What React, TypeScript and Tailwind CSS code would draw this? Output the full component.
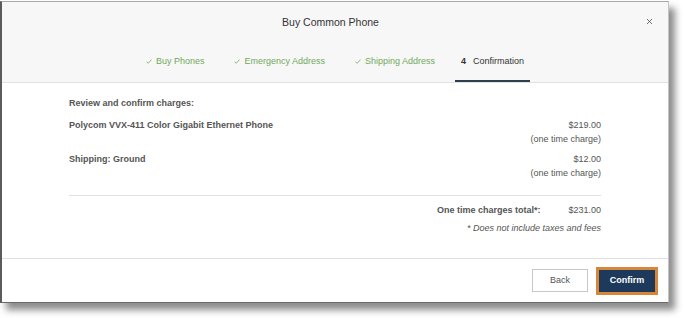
import { X } from 'lucide-react';

const steps = [
  { label: 'Buy Phones', done: true },
  { label: 'Emergency Address', done: true },
  { label: 'Shipping Address', done: true },
  { label: 'Confirmation', done: false, num: '4' },
];

function Check() {
  return (
    <svg width="6" height="5" viewBox="0 0 6 5" className="mr-[4px]">
      <path d="M0.5 2.8 L2.2 4.3 L5.5 0.6" fill="none" stroke="#72a95e" strokeWidth="0.8" />
    </svg>
  );
}

export default function App() {
  return (
    <div className="w-[684px] h-[318px] bg-white font-['Liberation_Sans',Arial,sans-serif] overflow-hidden">
      <div className="mt-[1px] w-[669px] h-[302px] flex flex-col bg-white border-l-2 border-l-[#5b5b5b] border-t border-t-[#a8a8a8] border-r border-r-[#c4c4c4] border-b border-b-[#6a6a6a] shadow-[6px_7px_7px_rgba(0,0,0,0.45)]">
        {/* Header */}
        <div className="relative bg-[#f7f7f7] border-b border-[#e1e1e1] flex flex-col items-center pt-[12px]">
          <div className="mr-[9px] text-[10.5px] leading-[16px] text-[#333]">Buy Common Phone</div>
          <button className="absolute right-[14px] top-[15px] text-[#444]">
            <X className="w-[9px] h-[9px]" strokeWidth={2} />
          </button>
          <div className="mt-[24px] flex items-end gap-[18px]">
            {steps.map((s) => (
              <div
                key={s.label}
                className={`flex items-center px-[6px] pb-[12px] text-[9px] leading-[14px] border-b-2 ${
                  s.done ? 'text-[#72a95e] border-transparent' : '-ml-[4px] text-[#333] border-[#2c3e50]'
                }`}
              >
                {s.done ? <Check /> : <span className="font-bold mr-[7px]">{s.num}</span>}
                {s.label}
              </div>
            ))}
          </div>
        </div>

        {/* Body */}
        <div className="flex-1 px-[67px] pt-[13px] text-[9px] leading-[14px] text-[#555]">
          <div className="font-bold">Review and confirm charges:</div>
          <div className="mt-[8px] flex justify-between">
            <div className="font-bold">Polycom VVX-411 Color Gigabit Ethernet Phone</div>
            <div className="text-right">
              <div>$219.00</div>
              <div>(one time charge)</div>
            </div>
          </div>
          <div className="mt-[6px] flex justify-between">
            <div className="font-bold">Shipping: Ground</div>
            <div className="text-right">
              <div>$12.00</div>
              <div>(one time charge)</div>
            </div>
          </div>
          <div className="mt-[15px] border-t border-[#e3e3e3] pt-[7px] flex justify-end gap-[28px]">
            <div className="font-bold">One time charges total*:</div>
            <div>$231.00</div>
          </div>
          <div className="mt-[4px] text-right italic">* Does not include taxes and fees</div>
        </div>

        {/* Footer */}
        <div className="h-[44px] border-t border-[#e1e1e1] flex items-center justify-end gap-[8px] pr-[10px]">
          <button className="w-[56px] h-[23px] bg-white border border-[#c8c8c8] text-[9px] text-[#555]">
            Back
          </button>
          <button className="w-[62px] h-[28px] bg-[#1d3a5c] border-[3px] border-[#d6873a] text-[9px] font-bold text-white">
            Confirm
          </button>
        </div>
      </div>
    </div>
  );
}
